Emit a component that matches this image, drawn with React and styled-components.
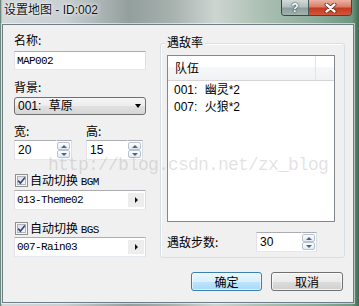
import React from "react";
import styled, { createGlobalStyle } from "styled-components";

const cjk = `"Noto Sans CJK SC", "Liberation Sans", sans-serif`;
const sans = `"Liberation Sans", "Noto Sans CJK SC", sans-serif`;
const mono = `"Liberation Mono", "Noto Sans CJK SC", monospace`;

const GlobalStyle = createGlobalStyle`
    html, body { margin: 0; padding: 0; }
    body {
        width: 359px;
        height: 306px;
        overflow: hidden;
        font-family: ${ cjk };
        font-size: 12px;
        color: #000;
    }
`;

const Window = styled.div`
    position: relative;
    width: 359px;
    height: 306px;
    display: flex;
    flex-direction: column;
    overflow: hidden;
    background: linear-gradient(90deg, #4f6e5e 0px, #d2d7d9 2px, #c9cfd1 18%, #939f9d 36%, #a7b1ae 48%, #cdd5d1 60%, #a9beb1 74%, #8dab9b 88%, #6f9782 98%, #3f6a52 100%);
`;

const TitleBar = styled.div`
    height: 24px;
    flex: none;
    display: flex;
    justify-content: space-between;
    align-items: flex-start;
    padding: 0 7px 0 4px;
`;

const Title = styled.div`
    padding-top: 3px;
    font: 12px/14px ${ sans };
    color: #111;
    text-shadow: 0 0 5px rgba(255, 255, 255, 0.95), 0 0 2px rgba(255, 255, 255, 0.9);
`;

const CaptionButtons = styled.div`
    display: flex;
    border: 1px solid #3a484c;
    border-top: none;
    border-radius: 0 0 4px 4px;
    overflow: hidden;
`;

const CaptionButton = styled.div`
    width: ${ p => p.$w }px;
    height: 15px;
    display: flex;
    align-items: center;
    justify-content: center;
    background: ${ p => ( p.$close
        ? "linear-gradient(#eab3a6 0%, #dc7d68 45%, #c43a22 55%, #d3573b 100%)"
        : "linear-gradient(#d2dad8 0%, #b3c0bd 45%, #8d9f9a 55%, #a3b4af 100%)" ) };
    & + & { border-left: 1px solid #4a585c; }
`;

const HelpGlyph = styled.span`
    font: bold 12px/12px ${ sans };
    color: #fff;
    text-shadow: 0 0 2px #2c3a3e, 0 0 1px #2c3a3e;
`;

const Client = styled.div`
    flex: 1;
    margin: 0 5px 3px 2px;
    background: #f0f0f0;
    border: 1px solid #6e7e88;
    box-shadow: 0 0 0 1px rgba(255, 255, 255, 0.55);
    display: grid;
    grid-template-columns: 132px 185px;
    column-gap: 14px;
    align-items: start;
    padding: 8px 8px 0 11px;
`;

const Column = styled.div`
    display: flex;
    flex-direction: column;
    margin-top: ${ p => p.$mt || 0 }px;
`;

const Label = styled.div`
    height: 14px;
    font: 12px/14px ${ cjk };
    margin-top: ${ p => p.$mt || 0 }px;
    white-space: nowrap;
`;

const Ascii = styled.span`
    font: 11px ${ mono };
    letter-spacing: -0.6px;
`;

const Field = styled.div`
    display: flex;
    align-items: center;
    height: ${ p => p.$h || 20 }px;
    margin-top: ${ p => p.$mt || 0 }px;
    box-sizing: border-box;
    border: 1px solid;
    border-color: #abadb3 #dbdfe6 #e3e9ef #e2e3ea;
    background: #fff;
    padding: 0 1px 0 2px;
    font: 11px/16px ${ mono };
    letter-spacing: -0.6px;
`;

const FieldText = styled.div`
    flex: 1;
    white-space: nowrap;
`;

const BrowseButton = styled.div`
    width: 16px;
    height: 14px;
    display: flex;
    align-items: center;
    justify-content: center;
    background: #ededed;
`;

const RightTri = styled.div`
    width: 0;
    height: 0;
    border-top: 3px solid transparent;
    border-bottom: 3px solid transparent;
    border-left: 3px solid #111;
    margin-left: 1px;
`;

const Select = styled.div`
    height: 18px;
    margin-top: ${ p => p.$mt || 0 }px;
    box-sizing: border-box;
    border: 1px solid #707070;
    border-radius: 3px;
    background: linear-gradient(#f6f6f6 0%, #ececec 50%, #e0e0e0 51%, #d6d6d6 100%);
    display: flex;
    align-items: center;
    justify-content: space-between;
    padding: 0 4px 0 3px;
    font: 12px/16px ${ sans };
    word-spacing: 4px;
`;

const DownTri = styled.div`
    width: 0;
    height: 0;
    border-left: 3.5px solid transparent;
    border-right: 3.5px solid transparent;
    border-top: 4px solid #000;
`;

const SpinRow = styled.div`
    display: grid;
    grid-template-columns: 58px 57px;
    column-gap: 14px;
    margin-top: ${ p => p.$mt || 0 }px;
`;

const SpinBox = styled.div`
    display: flex;
    height: 20px;
    width: ${ p => ( p.$w ? `${ p.$w }px` : "auto" ) };
    margin-top: ${ p => p.$mt || 0 }px;
`;

const SpinEdit = styled.div`
    flex: 1;
    box-sizing: border-box;
    border: 1px solid;
    border-color: #abadb3 #dbdfe6 #e3e9ef #e2e3ea;
    border-right: none;
    background: #fff;
    padding-left: 3px;
    font: 12px/18px ${ sans };
`;

const SpinButtons = styled.div`
    width: 16px;
    display: flex;
    flex-direction: column;
    box-sizing: border-box;
    border: 1px solid;
    border-color: #abadb3 #dbdfe6 #e3e9ef transparent;
    background: #fff;
    padding: 1px 1px 1px 0;
`;

const SpinArrow = styled.div`
    flex: 1;
    box-sizing: border-box;
    border: 1px solid #b9c3cf;
    border-radius: 2px;
    background: linear-gradient(#fdfeff, #e4eaf1);
    display: flex;
    align-items: center;
    justify-content: center;
`;

const ArrowUp = styled.div`
    width: 0;
    height: 0;
    border-left: 3px solid transparent;
    border-right: 3px solid transparent;
    border-bottom: 3px solid #4d6286;
`;

const ArrowDown = styled( ArrowUp )`
    border-bottom: none;
    border-top: 3px solid #4d6286;
`;

const CheckRow = styled.div`
    display: flex;
    align-items: center;
    gap: 2px;
    height: 13px;
    margin-top: ${ p => p.$mt || 0 }px;
    padding-left: 1px;
    font: 12px/13px ${ cjk };
`;

const Group = styled.div`
    position: relative;
    height: 215px;
    box-sizing: border-box;
    border: 1px solid #d5dfe5;
    border-radius: 3px;
    padding: 11px 9px 0 6px;
    box-shadow: inset 1px 1px 0 #fff;
`;

const GroupCaption = styled.div`
    position: absolute;
    left: 4px;
    top: -9px;
    padding: 0 2px;
    background: #f0f0f0;
    font: 12px/14px ${ cjk };
`;

const ListView = styled.div`
    height: 167px;
    box-sizing: border-box;
    border: 1px solid #828790;
    background: #fff;
`;

const ListHeader = styled.div`
    display: flex;
    height: 24px;
    border-bottom: 1px solid #d5d5d5;
    background: linear-gradient(#ffffff 0%, #ffffff 45%, #f6f7f8 46%, #f1f2f4 100%);
`;

const HeaderCell = styled.div`
    width: ${ p => p.$w }px;
    box-sizing: border-box;
    border-right: 1px solid #e2e4e8;
    padding-left: 7px;
    display: flex;
    align-items: center;
    font: 12px/14px ${ cjk };
`;

const ListRow = styled.div`
    height: 17px;
    padding-left: 6px;
    display: flex;
    align-items: center;
    font: 12px/14px ${ sans };
    word-spacing: 4px;
    &:first-of-type { margin-top: 1px; }
`;

const StepRow = styled.div`
    display: flex;
    align-items: center;
    margin-top: 10px;
`;

const StepLabel = styled.div`
    width: 89px;
    font: 12px/14px ${ cjk };
`;

const ButtonRow = styled.div`
    display: flex;
    justify-content: flex-end;
    gap: 9px;
    margin-top: 14px;
    padding-right: 2px;
`;

const Button = styled.div`
    width: ${ p => p.$w }px;
    height: 19px;
    box-sizing: border-box;
    border-radius: 3px;
    display: flex;
    align-items: center;
    justify-content: center;
    font: 12px/14px ${ cjk };
    border: 1px solid ${ p => ( p.$default ? "#3c7fb1" : "#707070" ) };
    background: ${ p => ( p.$default
        ? "linear-gradient(#eaf6fd 0%, #d9f0fc 50%, #bee6fd 51%, #a7d9f5 100%)"
        : "linear-gradient(#f2f2f2 0%, #ebebeb 50%, #dddddd 51%, #cfcfcf 100%)" ) };
    box-shadow: inset 0 0 0 1px ${ p => ( p.$default ? "rgba(255,255,255,0.55)" : "rgba(255,255,255,0.7)" ) };
`;

const Watermark = styled.div`
    position: absolute;
    left: 48px;
    top: 156px;
    font: 18px/18px ${ mono };
    letter-spacing: -0.8px;
    color: rgba(120, 120, 120, 0.22);
    white-space: nowrap;
    pointer-events: none;
`;

const CheckBox = ( ) => (
    <svg width="13" height="13" viewBox="0 0 13 13">
        <defs>
            <linearGradient id="cbg" x1="0" y1="0" x2="1" y2="1">
                <stop offset="0" stopColor="#dcdcdc" />
                <stop offset="1" stopColor="#fbfbfb" />
            </linearGradient>
        </defs>
        <rect x="0.5" y="0.5" width="12" height="12" fill="#f6f6f6" stroke="#8e8f8f" />
        <rect x="2.5" y="2.5" width="8" height="8" fill="url(#cbg)" stroke="#b0b4b8" />
        <path d="M3.2 6.6 L5.4 9.2 L9.9 3.4" fill="none" stroke="#2b4a8a" strokeWidth="1.7" />
    </svg>
);

const CloseGlyph = ( ) => (
    <svg width="13" height="10" viewBox="0 0 13 10">
        <path d="M2.5 1.5 L10.5 8.5 M10.5 1.5 L2.5 8.5" stroke="#5a1a10" strokeWidth="3.8" strokeLinecap="round" />
        <path d="M2.5 1.5 L10.5 8.5 M10.5 1.5 L2.5 8.5" stroke="#fff" strokeWidth="2.4" strokeLinecap="round" />
    </svg>
);

const Spin = ( { value, w, mt } ) => (
    <SpinBox $w={ w } $mt={ mt }>
        <SpinEdit>{ value }</SpinEdit>
        <SpinButtons>
            <SpinArrow><ArrowUp /></SpinArrow>
            <SpinArrow><ArrowDown /></SpinArrow>
        </SpinButtons>
    </SpinBox>
);

const troops = [
    { id: 1, text: "001: 幽灵*2" },
    { id: 7, text: "007: 火狼*2" },
];

export default function App( ) {
    const rows = troops.map( t => <ListRow key={ t.id }>{ t.text }</ListRow> );
    return (
        <Window>
            <GlobalStyle />
            <TitleBar>
                <Title>设置地图 - ID:002</Title>
                <CaptionButtons>
                    <CaptionButton $w={ 26 }><HelpGlyph>?</HelpGlyph></CaptionButton>
                    <CaptionButton $w={ 42 } $close><CloseGlyph /></CaptionButton>
                </CaptionButtons>
            </TitleBar>
            <Client>
                <Column>
                    <Label>名称:</Label>
                    <Field $mt={ 4 } $h={ 19 }><FieldText>MAP002</FieldText></Field>
                    <Label $mt={ 10 }>背景:</Label>
                    <Select $mt={ 3 }>
                        <span>001: 草原</span>
                        <DownTri />
                    </Select>
                    <SpinRow $mt={ 9 }>
                        <div>
                            <Label>宽:</Label>
                            <Spin value="20" mt={ 2 } />
                        </div>
                        <div>
                            <Label>高:</Label>
                            <Spin value="15" mt={ 2 } />
                        </div>
                    </SpinRow>
                    <CheckRow $mt={ 14 }>
                        <CheckBox />
                        <span>自动切换 <Ascii>BGM</Ascii></span>
                    </CheckRow>
                    <Field $mt={ 3 }>
                        <FieldText>013-Theme02</FieldText>
                        <BrowseButton><RightTri /></BrowseButton>
                    </Field>
                    <CheckRow $mt={ 12 }>
                        <CheckBox />
                        <span>自动切换 <Ascii>BGS</Ascii></span>
                    </CheckRow>
                    <Field $mt={ 2 }>
                        <FieldText>007-Rain03</FieldText>
                        <BrowseButton><RightTri /></BrowseButton>
                    </Field>
                </Column>
                <Column $mt={ 10 }>
                    <Group>
                        <GroupCaption>遇敌率</GroupCaption>
                        <ListView>
                            <ListHeader>
                                <HeaderCell $w={ 148 }>队伍</HeaderCell>
                            </ListHeader>
                            { rows }
                        </ListView>
                        <StepRow>
                            <StepLabel>遇敌步数:</StepLabel>
                            <Spin value="30" w={ 61 } />
                        </StepRow>
                    </Group>
                    <ButtonRow>
                        <Button $w={ 71 } $default>确定</Button>
                        <Button $w={ 72 }>取消</Button>
                    </ButtonRow>
                </Column>
            </Client>
            <Watermark>http://blog.csdn.net/zx_blog</Watermark>
        </Window>
    );
}
